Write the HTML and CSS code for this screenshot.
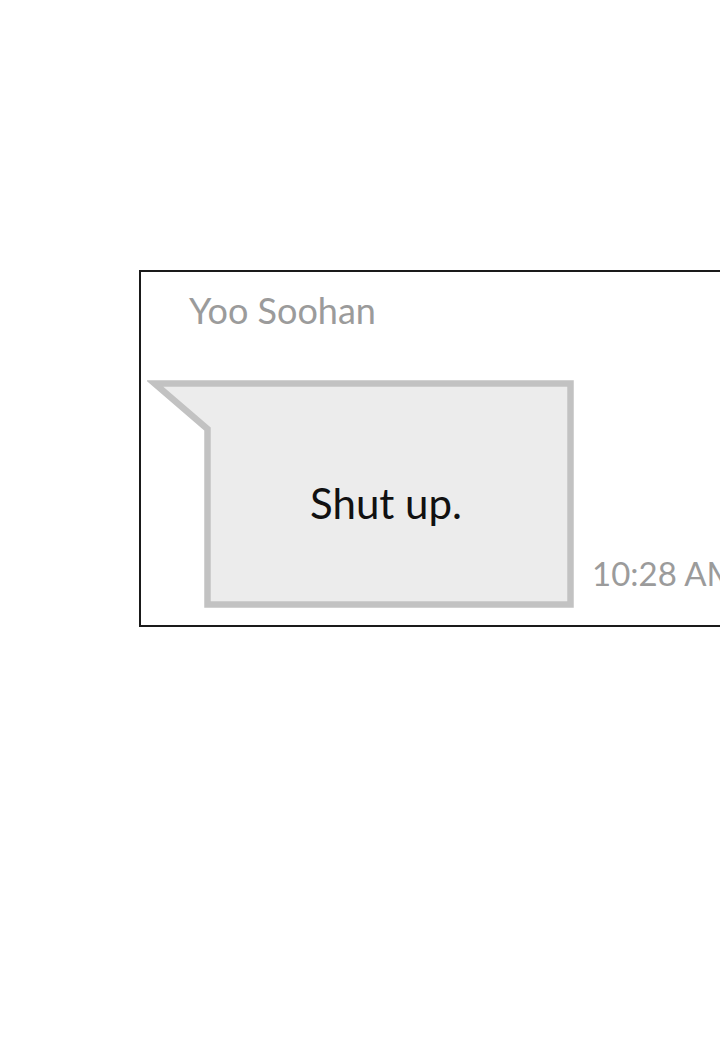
FILE: index.html
```html
<!DOCTYPE html>
<html lang="en">

<head>
    <meta charset="UTF-8">
    <meta name="viewport" content="width=device-width, initial-scale=1.0">
    <title>Message</title>
    <link rel="stylesheet" href="styles.css">
</head>

<body>
    <div class="card">
        <div class="sender">Yoo Soohan</div>

        <!-- 消息气泡 + 时间 -->
        <div class="msg-row">
            <div class="bubble">
                <svg class="bubble-shape" viewBox="0 0 428 230" width="428" height="230">
                    <polygon points="7.5,4.5 423.5,4.5 423.5,225.5 60.5,225.5 60.5,50"
                        fill="#ececec" stroke="#c2c2c2" stroke-width="6.5" stroke-linejoin="miter" />
                </svg>
                <span class="bubble-text">Shut up.</span>
            </div>
            <div class="time">10:28 AM</div>
        </div>
    </div>
</body>

</html>
```

FILE: styles.css
```css
body {
    margin: 0;
    padding: 0;
    background: #fff;
    font-family: Lato, "Noto Sans", sans-serif;
    overflow: hidden;
    width: 720px;
    height: 1046px;
}

.card {
    margin: 270px 0 0 139px;
    width: 660px;
    height: 357px;
    box-sizing: border-box;
    border: 2px solid #1a1a1a;
    padding: 16px 0 0 48px;
}

.sender {
    font-size: 36px;
    line-height: 44px;
    color: #9b9b9b;
}

.msg-row {
    display: flex;
    align-items: flex-end;
    margin: 47px 0 0 -42px;
}

.bubble {
    position: relative;
    width: 428px;
    height: 230px;
    box-sizing: border-box;
    padding: 18px 0 0 50px;
    display: flex;
    align-items: center;
    justify-content: center;
}

/* 气泡外形（带左上角的尾巴） */
.bubble-shape {
    position: absolute;
    left: 0;
    top: 0;
}

.bubble-text {
    position: relative;
    font-size: 42px;
    color: #111;
}

.time {
    font-size: 33px;
    line-height: 40px;
    color: #9b9b9b;
    margin: 0 0 16px 17px;
    white-space: nowrap;
}
```
